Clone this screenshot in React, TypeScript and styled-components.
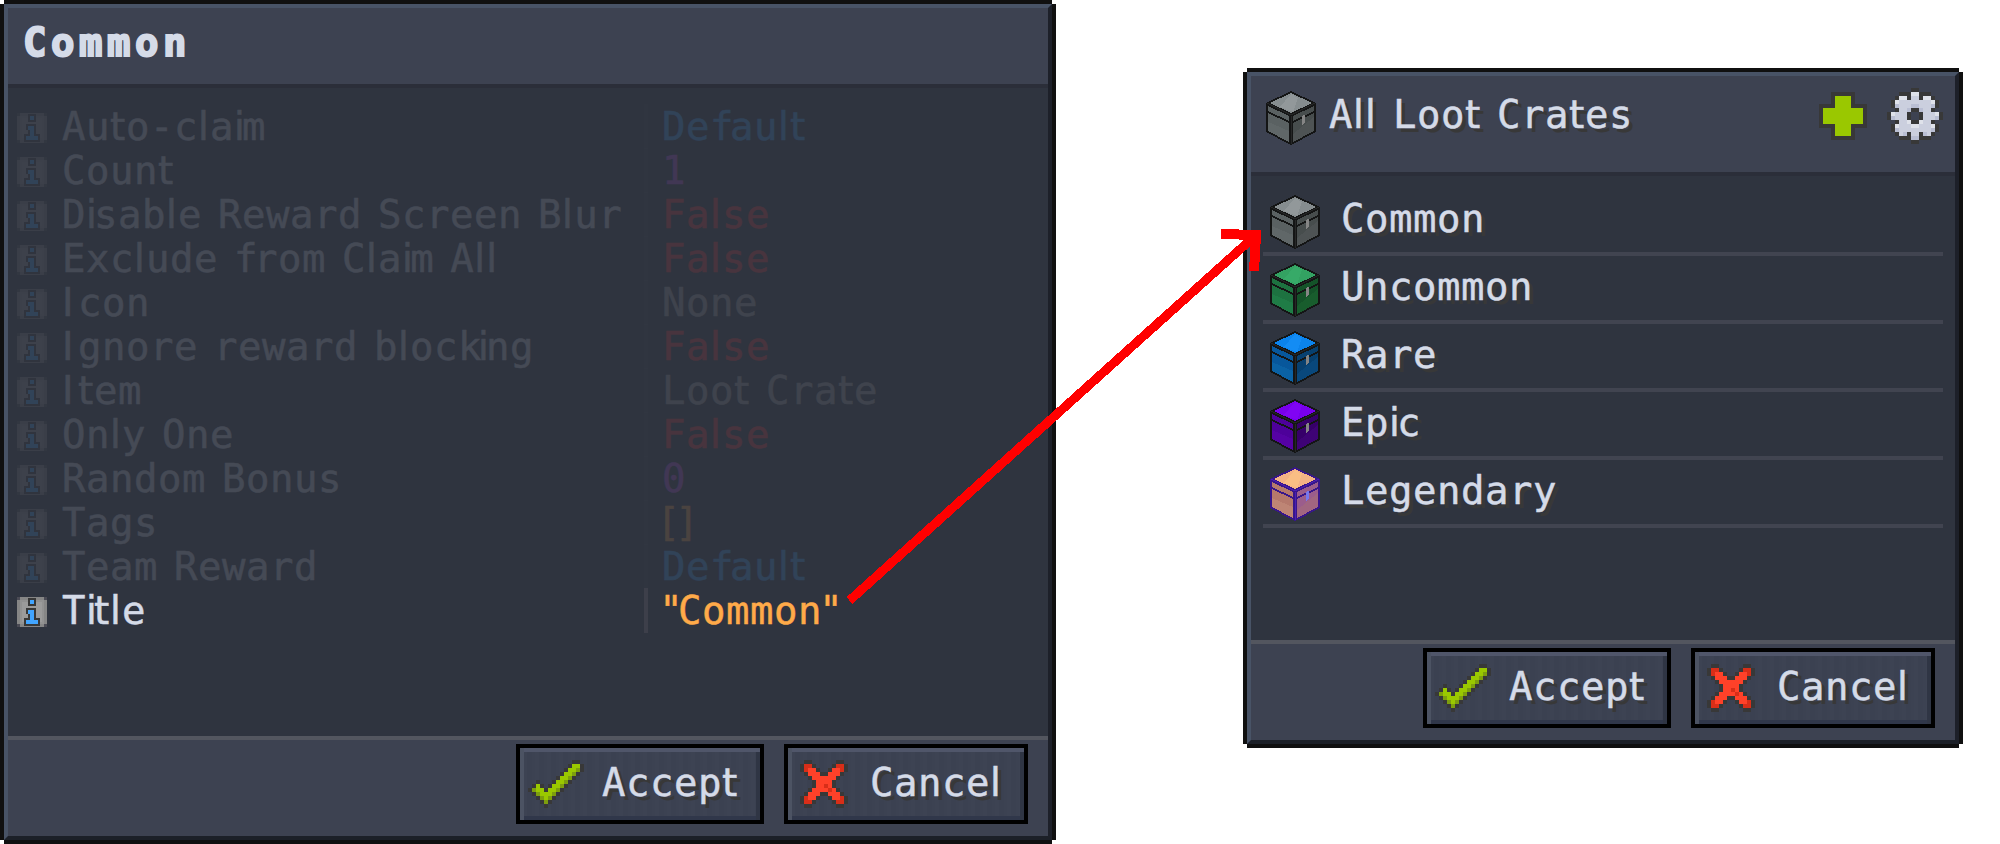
import React from "react";
import styled, { createGlobalStyle, css } from "styled-components";

const GlobalStyle = createGlobalStyle`
  body { margin: 0; background: #fff; }
  *, *::before, *::after { box-sizing: border-box; }
`;

/* ---------- text ---------- */

const MONO = '"DejaVu Sans Mono", monospace';
const SANS = '"DejaVu Sans", sans-serif';

/* Narrow characters: [use the proportional face, letter-spacing in px] */
const NARROW: Record<string, [boolean, number]> = {
  i: [true, -2.8],
  l: [true, 1.2],
  t: [true, 0.7],
  I: [true, 4.5],
  " ": [true, 3.6],
  '"': [true, -1.9],
  "[": [true, 0.8],
  "]": [true, 0.8],
  f: [false, -3.5],
  k: [false, -3.5],
};

const TextLine = styled.span<{ $color?: string; $shadow?: boolean; $bold?: boolean }>`
  display: block;
  margin-left: ${(p) => (p.$bold ? "-1px" : "-2px")};
  padding-top: 1px;
  font-family: ${MONO};
  font-size: 39px;
  line-height: 44px;
  letter-spacing: ${(p) => (p.$bold ? "4.5px" : "0.52px")};
  font-weight: ${(p) => (p.$bold ? 700 : 400)};
  -webkit-text-stroke: ${(p) => (p.$bold ? "2px" : "0.5px")} currentColor;
  white-space: pre;
  color: ${(p) => p.$color ?? "#d5dbe8"};
  ${(p) => p.$shadow && css`text-shadow: 4px 4px 0 #383838;`}
`;

const NarrowRun = styled.span<{ $sans: boolean; $gap: number }>`
  font-family: ${(p) => (p.$sans ? SANS : MONO)};
  letter-spacing: ${(p) => p.$gap}px;
`;

type LabelProps = { text: string; color?: string; shadow?: boolean; bold?: boolean };

function Label({ text, color, shadow, bold }: LabelProps) {
  const runs = bold ? [text] : text.match(/([iltIfk "[\]])\1*|[^iltIfk "[\]]+/g) ?? [];
  return (
    <TextLine $color={color} $shadow={shadow} $bold={bold}>
      {runs.map((run, i) => {
        const narrow = bold ? undefined : NARROW[run[0]];
        return narrow ? (
          <NarrowRun key={i} $sans={narrow[0]} $gap={narrow[1]}>{run}</NarrowRun>
        ) : (
          run
        );
      })}
    </TextLine>
  );
}

/* ---------- icons ---------- */

const IconSvg = styled.svg`
  display: block;
  flex: none;
`;

const INK: Record<string, string> = {
  "#": "#383838",
  g: "#9ac800",
  d: "#7d9e0e",
  R: "#ff4129",
  D: "#d82e18",
  W: "#dfe2ea",
  L: "#cbcfde",
  M: "#b9bed3",
};

function Bitmap({ rows }: { rows: string[] }) {
  const w = rows[0].length;
  const h = rows.length;
  return (
    <IconSvg width={w * 4} height={h * 4} viewBox={`0 0 ${w} ${h}`} shapeRendering="crispEdges">
      {rows.flatMap((row, y) =>
        [...row].map((c, x) =>
          INK[c] ? <rect key={`${x}-${y}`} x={x} y={y} width={1} height={1} fill={INK[c]} /> : null
        )
      )}
    </IconSvg>
  );
}

const CHECK = [
  "...........##.",
  "..........#gg#",
  ".........#ggd#",
  "........#ggd#.",
  ".......#ggd#..",
  "..#...#ggd#...",
  ".#g#.#ggd#....",
  "#dgg#ggd#.....",
  ".#dgggd#......",
  "..#dgd#.......",
  "...#d#........",
  "....#.........",
];

const CROSS = [
  ".##......##.",
  "#DD#....#DD#",
  "#DRR#..#RRD#",
  ".#RRR##RRR#.",
  "..#RRRRRR#..",
  "...#RRRR#...",
  "...#RRDR#...",
  "..#RRRRDR#..",
  ".#RRR##RRR#.",
  "#DRR#..#RRD#",
  "#DD#....#DD#",
  ".##......##.",
];

const PLUS = [
  "...######...",
  "...#gggg#...",
  "...#gggg#...",
  "####gggg####",
  "#gggggggggg#",
  "#gggggggggg#",
  "#gggggggggg#",
  "#gggggggggg#",
  "####gggg####",
  "...#gggg#...",
  "...#gggg#...",
  "...######...",
];

const GEAR = [
  "......##......",
  "...###WW###...",
  "..#WW#LL#WW#..",
  ".#WLLLLLLLLW#.",
  ".#MLLLMMLLLM#.",
  "..#LLM##MLL#..",
  "#WLLL#..#LLLW#",
  "#MLLL#..#LLLM#",
  "..#LLW##WLL#..",
  ".#WLLLWWLLLW#.",
  ".#MLLLLLLLLM#.",
  "..#LM#LL#ML#..",
  "...###MM###...",
  "......##......",
];

function InfoIcon() {
  return (
    <IconSvg width={30} height={30} viewBox="0 0 30 30" shapeRendering="crispEdges">
      <rect width={30} height={30} fill="#4b4b55" />
      <path d="M3 0H27V3H30V27H27V30H3V27H0V3H3Z" fill="#868686" />
      <rect x={3} y={3} width={24} height={24} fill="#929292" />
      <rect x={5} y={5} width={20} height={20} fill="#9b9b9b" />
      <path d="M11 1H19V9H11ZM9 11H19V21H23V29H7V21H11V17H9Z" fill="#383838" />
      <path d="M13 3H17V7H13ZM11 13H17V23H21V27H9V23H13V17H11Z" fill="#42a5ff" />
    </IconSvg>
  );
}

type CrateTone = {
  top: string;
  shine: string;
  left: string;
  leftLow: string;
  right: string;
  rightLow: string;
  edge: string;
  rim: string;
  latch: string;
};

function Crate({ tone }: { tone: CrateTone }) {
  return (
    <IconSvg width={50} height={54} viewBox="0 0 50 54" shapeRendering="crispEdges">
      <path d="M25 0L50 12V41L25 54L0 41V12Z" fill={tone.edge} />
      <path d="M25 2L46 12L25 22L4 12Z" fill={tone.top} />
      <path d="M25 3L32 7L27 21L14 16Z" fill={tone.shine} opacity={0.5} />
      <path d="M2 15L23 25V30L2 20Z" fill={tone.left} />
      <path d="M2 22L23 32V51L2 40Z" fill={tone.left} />
      <path d="M2 31L23 40V51L2 40Z" fill={tone.leftLow} opacity={0.7} />
      <path d="M27 25L48 15V20L27 30Z" fill={tone.right} />
      <path d="M27 32L48 22V40L27 51Z" fill={tone.right} />
      <path d="M27 43L48 26V40L27 51Z" fill={tone.rightLow} opacity={0.7} />
      <path d="M1 12L25 24L49 12" fill="none" stroke={tone.rim} strokeWidth={1} />
      <path d="M25 25V53" fill="none" stroke={tone.rim} strokeWidth={1} />
      <path d="M36 25L39 23.500V32L36 34Z" fill={tone.latch} />
    </IconSvg>
  );
}

const base = { edge: "#141515", rim: "#262727", latch: "#858585" };
const COMMON: CrateTone = { ...base, top: "#868d8f", shine: "#9ea4a6", left: "#5a6162", leftLow: "#636a6b", right: "#474d4d", rightLow: "#515657" };
const UNCOMMON: CrateTone = { ...base, top: "#33a262", shine: "#3bb26e", left: "#1d7240", leftLow: "#218049", right: "#145329", rightLow: "#19622f" };
const RARE: CrateTone = { ...base, top: "#0b83ec", shine: "#1b95fb", left: "#07579b", leftLow: "#0b66a9", right: "#07406f", rightLow: "#0a4c82" };
const EPIC: CrateTone = { ...base, top: "#7800ec", shine: "#8707fb", left: "#4d019a", leftLow: "#5803a8", right: "#360069", rightLow: "#42047b" };
const LEGENDARY: CrateTone = {
  top: "#f3b285", shine: "#ffca83", left: "#b5796c", leftLow: "#c28a79", right: "#9b5d8c", rightLow: "#a46b7c",
  edge: "#37168a", rim: "#4b1db5", latch: "#7777ee",
};

/* ---------- windows ---------- */

const Page = styled.main`
  position: relative;
  display: flex;
  align-items: flex-start;
  gap: 187px;
  width: 2000px;
  height: 844px;
  overflow: hidden;
  background: #fff;
`;

const Window = styled.section<{ $width: number; $height: number; $top: number }>`
  display: flex;
  flex: none;
  flex-direction: column;
  width: ${(p) => p.$width}px;
  height: ${(p) => p.$height}px;
  margin-top: ${(p) => p.$top}px;
  padding: 4px;
`;

const Frame = styled.div`
  display: flex;
  flex: 1;
  flex-direction: column;
  border: 4px solid;
  border-color: #485366 #1d2029 #1c2028 #485366;
  box-shadow: 0 -4px #101010, 4px 0 #101010, 0 4px #101010, -4px 0 #101010;
`;

const Header = styled.header<{ $height: number }>`
  display: flex;
  align-items: flex-start;
  height: ${(p) => p.$height}px;
  padding: 12px 12px 0 16px;
  background: #3d4251;
  border-bottom: 4px solid #2b2e39;
`;

const Body = styled.div`
  flex: 1;
  padding: 16px 0 0 9px;
  background: #2f343f;
`;

const Footer = styled.footer`
  display: flex;
  justify-content: flex-end;
  gap: 20px;
  height: 100px;
  padding: 4px 20px 0 0;
  background: #3d4251;
  border-top: 4px solid #53565f;
`;

const Button = styled.button<{ $width: number }>`
  display: flex;
  align-items: flex-start;
  width: ${(p) => p.$width}px;
  height: 80px;
  padding: 12px 0 0 8px;
  border: 4px solid #000;
  background:
    linear-gradient(#6b7080, #6b7080) 0 0 / 4px 4px no-repeat,
    repeating-linear-gradient(90deg, #3c4252 0 3px, #3d4353 3px 7px, #3b4151 7px 12px);
  box-shadow:
    inset 4px 0 #4c5363,
    inset 0 4px #50566a,
    inset -4px 0 #2f3544,
    inset 0 -4px #30374a;
`;

const ButtonIcon = styled.span<{ $indent?: number }>`
  width: 76px;
  padding-left: ${(p) => p.$indent ?? 0}px;
`;

/* ---------- property list ---------- */

const Property = styled.div<{ $faded: boolean }>`
  display: grid;
  grid-template-columns: 47px 580px 20px 1fr;
  height: 44px;
  opacity: ${(p) => (p.$faded ? 0.13 : 1)};
`;

const PropertyIcon = styled.span`
  padding-top: 9px;
`;

const Divider = styled.span`
  width: 4px;
  background: #3d3f4a;
`;

const BLUE = "#42a5ff";
const PURPLE = "#bb52e0";
const RED = "#f03a3a";
const GREY = "#aaaaaa";
const ORANGE = "#ffaa49";

const PROPERTIES: [string, string, string][] = [
  ["Auto-claim", "Default", BLUE],
  ["Count", "1", PURPLE],
  ["Disable Reward Screen Blur", "False", RED],
  ["Exclude from Claim All", "False", RED],
  ["Icon", "None", GREY],
  ["Ignore reward blocking", "False", RED],
  ["Item", "Loot Crate", GREY],
  ["Only One", "False", RED],
  ["Random Bonus", "0", PURPLE],
  ["Tags", "[]", ORANGE],
  ["Team Reward", "Default", BLUE],
  ["Title", '"Common"', ORANGE],
];

/* ---------- crate list ---------- */

const Toolbar = styled.div`
  display: flex;
  gap: 20px;
  margin-left: auto;
`;

const PlusSlot = styled.span`
  padding-top: 4px;
`;

const HeaderCrate = styled.span`
  width: 65px;
  padding-top: 3px;
  margin-left: -1px;
`;

const HeaderTitle = styled.div`
  padding-top: 4px;
`;

const CrateRow = styled.div`
  display: flex;
  width: 680px;
  height: 68px;
  margin-left: 3px;
  padding: 7px 0 0 7px;
  border-bottom: 4px solid #414450;
`;

const CrateIcon = styled.span`
  width: 73px;
`;

const CrateList = styled.div`
  margin-top: -4px;
`;

const CrateName = styled.div`
  margin-top: 1px;
`;

const CRATES: [string, CrateTone][] = [
  ["Common", COMMON],
  ["Uncommon", UNCOMMON],
  ["Rare", RARE],
  ["Epic", EPIC],
  ["Legendary", LEGENDARY],
];

const ArrowOverlay = styled.svg`
  position: absolute;
  inset: 0;
  pointer-events: none;
`;

function Actions() {
  return (
    <Footer>
      <Button $width={248}>
        <ButtonIcon><Bitmap rows={CHECK} /></ButtonIcon>
        <Label text="Accept" shadow />
      </Button>
      <Button $width={244}>
        <ButtonIcon $indent={4}><Bitmap rows={CROSS} /></ButtonIcon>
        <Label text="Cancel" shadow />
      </Button>
    </Footer>
  );
}

export default function App() {
  return (
    <>
      <GlobalStyle />
      <Page>
        <Window $width={1056} $height={844} $top={0}>
          <Frame>
            <Header $height={80}>
              <Label text="Common" bold />
            </Header>
            <Body>
              {PROPERTIES.map(([name, value, color]) => (
                <Property key={name} $faded={name !== "Title"}>
                  <PropertyIcon><InfoIcon /></PropertyIcon>
                  <Label text={name} />
                  <Divider />
                  <Label text={value} color={color} />
                </Property>
              ))}
            </Body>
            <Actions />
          </Frame>
        </Window>
        <Window $width={720} $height={680} $top={68}>
          <Frame>
            <Header $height={100}>
              <HeaderCrate><Crate tone={COMMON} /></HeaderCrate>
              <HeaderTitle><Label text="All Loot Crates" shadow /></HeaderTitle>
              <Toolbar>
                <PlusSlot><Bitmap rows={PLUS} /></PlusSlot>
                <Bitmap rows={GEAR} />
              </Toolbar>
            </Header>
            <Body>
              <CrateList>
                {CRATES.map(([name, tone]) => (
                  <CrateRow key={name}>
                    <CrateIcon><Crate tone={tone} /></CrateIcon>
                    <CrateName><Label text={name} shadow /></CrateName>
                  </CrateRow>
                ))}
              </CrateList>
            </Body>
            <Actions />
          </Frame>
        </Window>
        <ArrowOverlay width={2000} height={844} viewBox="0 0 2000 844" shapeRendering="crispEdges">
          <path d="M849.500 600.500L1256 235" fill="none" stroke="#f00" strokeWidth={9} />
          <path d="M1221 234L1256 235L1254 271" fill="none" stroke="#f00" strokeWidth={10} />
        </ArrowOverlay>
      </Page>
    </>
  );
}
